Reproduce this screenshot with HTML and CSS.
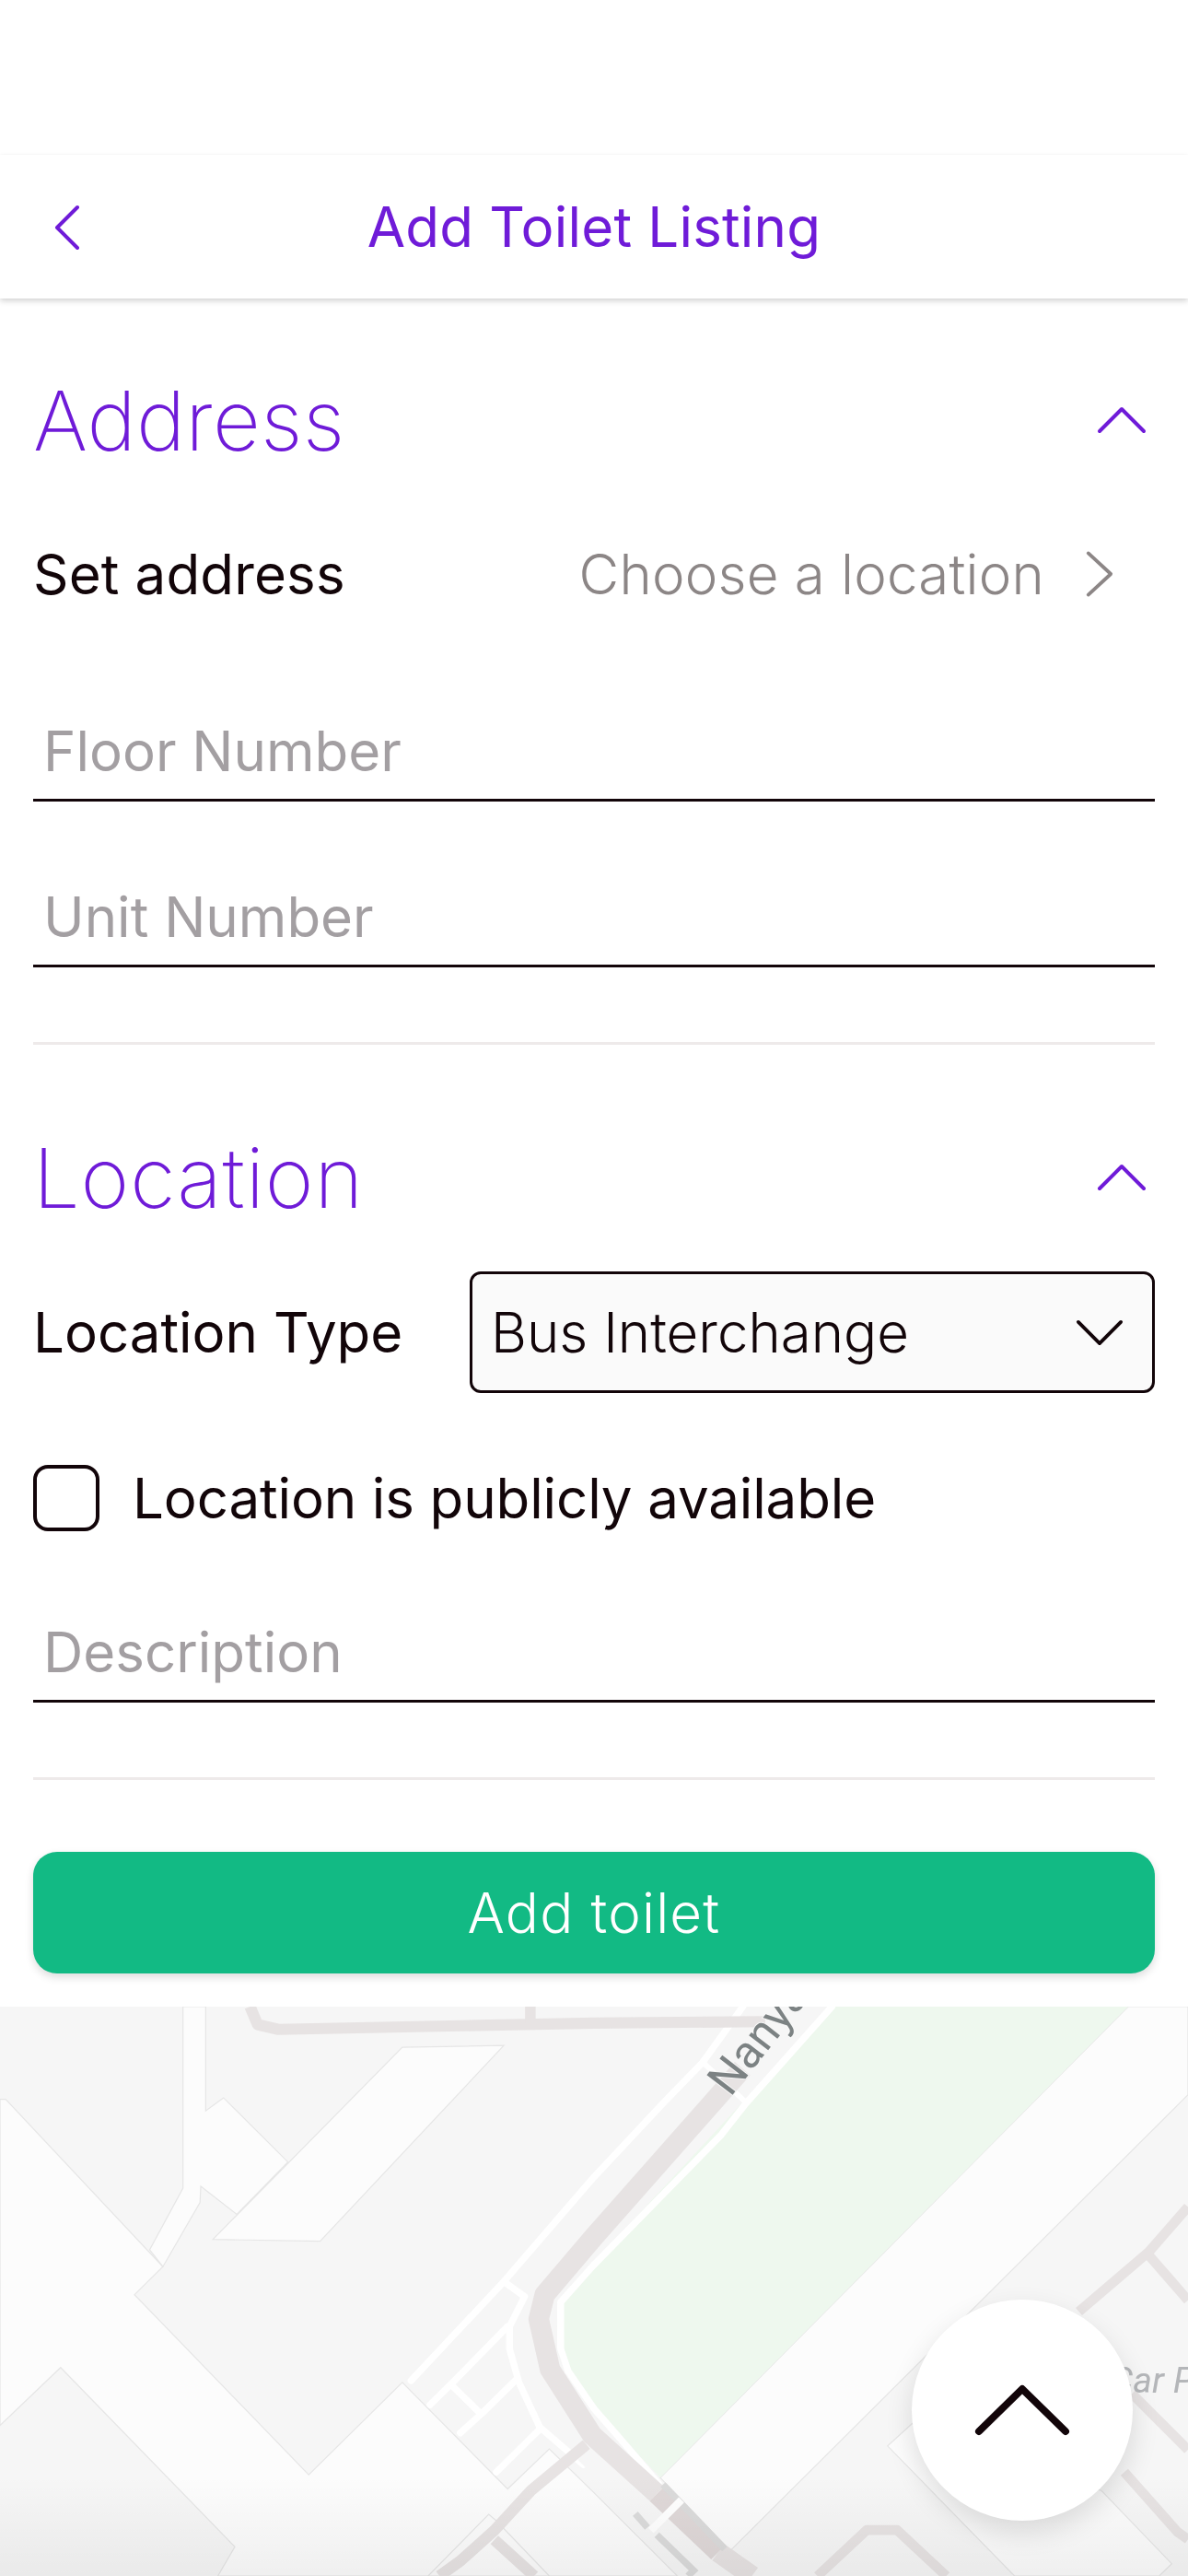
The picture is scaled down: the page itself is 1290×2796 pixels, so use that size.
FILE: index.html
```html
<!DOCTYPE html>
<html lang="en">
<head>
<meta charset="utf-8">
<title>Add Toilet Listing</title>
<link rel="stylesheet" href="styles.css">
</head>
<body>
<div class="page">
  <header class="topbar">
    <svg class="back" viewBox="0 0 32 52"><path d="M28 4 6 26l22 22"/></svg>
    <h1 class="topbar-title">Add Toilet Listing</h1>
  </header>
  <main class="form">
    <section class="sec-head sec-address">
      <h2 class="sec-title">Address</h2>
      <svg class="chev-up" viewBox="0 0 54 34"><path d="M3 29 27 5l24 24"/></svg>
    </section>
    <div class="row row-address">
      <span class="label label-address">Set address</span>
      <span class="choose">Choose a location</span>
      <svg class="chev-right" viewBox="0 0 34 54"><path d="M5 3l26 24L5 51"/></svg>
    </div>
    <div class="field field-floor"><span class="placeholder">Floor Number</span></div>
    <div class="field field-unit"><span class="placeholder">Unit Number</span></div>
    <hr class="divider">
    <section class="sec-head sec-location">
      <h2 class="sec-title">Location</h2>
      <svg class="chev-up" viewBox="0 0 54 34"><path d="M3 29 27 5l24 24"/></svg>
    </section>
    <div class="row row-type">
      <span class="label">Location Type</span>
      <div class="select">
        <span class="select-text">Bus Interchange</span>
        <svg class="chev-down" viewBox="0 0 54 34"><path d="M3 5l24 24L51 5"/></svg>
      </div>
    </div>
    <label class="check-row">
      <span class="checkbox"></span>
      <span class="label label-check">Location is publicly available</span>
    </label>
    <div class="field field-desc"><span class="placeholder">Description</span></div>
    <hr class="divider">
    <button class="submit" type="button">Add toilet</button>
  </main>
  <div class="map">
    <svg class="map-svg" viewBox="0 44 3136 1524" preserveAspectRatio="none">
      <defs>
        <linearGradient id="fade" x1="0" y1="0" x2="0" y2="1">
          <stop offset="0" stop-color="#000" stop-opacity="0"/>
          <stop offset="1" stop-color="#000" stop-opacity=".05"/>
        </linearGradient>
      </defs>
      <rect x="0" y="44" width="3136" height="1524" fill="#f6f6f6"/>
      <g class="blocks">
        <path d="M0 292H15L430 740 355 815 815 1297 1062 1050 1340 1335 1450 1228 1568 1345 1788 1568H575L620 1490 160 1010 0 1165Z"/>
        <path d="M483 44V530L395 695 430 740 528 568 530 525 625 600 760 460 590 288 543 323V44Z"/>
        <path d="M1062 153 1330 148 845 672 562 667Z"/>
        <path d="M2978 44H3136V280L1928 1500 1743 1305Z"/>
        <path d="M2408 1160 2343 1220 2678 1568H3060L3093 1535 2908 1340Z"/>
        <path d="M1290 1403 1130 1568H1450L1310 1420Z"/>
      </g>
      <path class="green" d="M2198 44H2978L1743 1305 1568 1120 1500 1020 1470 900 1480 830 1568 735 1640 650 1960 300Z"/>
      <g class="whites">
        <path d="M1085 1045 1330 780 1568 500 1750 303 1855 193 1961 44"/>
        <path d="M1135 1110 1200 1045 1340 900"/>
        <path d="M1330 780 1385 820 1345 900 1345 960 1370 1050 1425 1170 1540 1270"/>
        <path d="M1195 1060 1265 1130"/>
        <path d="M1215 1185 1275 1130 1365 1040"/>
        <path d="M1310 1290 1425 1175"/>
      </g>
      <g class="whites-green">
        <path d="M1568 735 1480 835 1480 960 1500 1020 1568 1120 1628 1190 1738 1320"/>
        <path d="M1568 735 1904 387 1969 303 2196 44"/>
        <path class="hair" d="M1855 193 1969 300"/>
      </g>
      <path class="strip" d="M1540 1241 1677 1380"/>
      <g class="roads">
        <path d="M660 44 680 92 735 105 1568 88 2020 84"/>
        <path class="spur" d="M1400 44V90"/>
        <path class="main" d="M1960 210 1568 660 1438 815 1422 880 1452 1015 1563 1191 1734 1348"/>
        <path class="main" d="M1896 1504 1985 1568"/>
        <path d="M1548 1216 1402 1339 1305 1446 1215 1528 1160 1568"/>
        <path d="M1305 1471 1410 1568"/>
        <path class="thin" d="M3136 580 3033 700 2848 860"/>
        <path class="thin" d="M3033 710 3136 830"/>
        <path class="thin" d="M2968 1290 3108 1450 3136 1470"/>
        <path class="thin" d="M2988 1080 3136 1230"/>
        <path class="thin" d="M2158 1568 2288 1445 2368 1445 2498 1568"/>
      </g>
      <path class="road-dark" d="M1734 1348 1896 1504"/>
      <g class="paths-gray">
        <path d="M1750 1323 1913 1496"/>
        <path d="M1677 1401 1709 1438"/>
        <path d="M1734 1458 1831 1553 1816 1568"/>
      </g>
      <path class="cross" d="M1799 1364 1718 1446"/>
      <rect x="0" y="1300" width="3136" height="268" fill="url(#fade)"/>
      <text class="map-label" transform="translate(1928 288) rotate(-52)">Nanya</text>
      <text class="map-label-soft" x="2930" y="1078">Car P</text>
    </svg>
  </div>
  <button class="scroll-top" type="button" aria-label="Scroll to top">
    <svg viewBox="0 0 104 56"><path d="M5 51 52 5l47 46"/></svg>
  </button>
</div>
</body>
</html>
```
FILE: styles.css
```css
* { box-sizing: border-box; }
html, body { margin: 0; padding: 0; background: #fff; }
.page {
  position: relative;
  width: 1290px;
  height: 2796px;
  overflow: hidden;
  font-family: Inter, "Liberation Sans", sans-serif;
  color: #120509;
  background: #fff;
}
.topbar {
  position: relative;
  margin-top: 168px;
  height: 156px;
  display: flex;
  align-items: center;
  justify-content: center;
  background: #fff;
  box-shadow: 0 0 2px rgba(0,0,0,.03), 0 3px 6px rgba(0,0,0,.16);
}
.back {
  position: absolute;
  left: 56px;
  top: 53px;
  width: 32px;
  height: 52px;
  fill: none;
  stroke: #6f1bd8;
  stroke-width: 4;
  stroke-linecap: round;
  stroke-linejoin: round;
}
.topbar-title {
  margin: 0;
  font-size: 60px;
  font-weight: 400;
  letter-spacing: .2px;
  color: #6f1bd8;
}
.form { padding: 0 36px; }
.sec-head {
  height: 120px;
  display: flex;
  align-items: center;
  justify-content: space-between;
}
.sec-address { margin-top: 72px; }
.sec-location { margin-top: 84px; }
.sec-title {
  margin: 0;
  font-size: 90px;
  font-weight: 200;
  letter-spacing: .25px;
  color: #6f1bd8;
}
.sec-location .sec-title { letter-spacing: .9px; }
.chev-up, .chev-down, .chev-right {
  fill: none;
  stroke-width: 4;
  stroke-linecap: round;
  stroke-linejoin: round;
  flex: none;
}
.chev-up { width: 54px; height: 34px; margin-right: 9px; stroke: #6f1bd8; }
.row { display: flex; align-items: center; }
.row-address { margin-top: 57px; height: 100px; }
.label { font-size: 60px; font-weight: 400; color: #120509; }
.label-address { letter-spacing: .15px; }
.label-check { letter-spacing: -.12px; }
.choose { margin-left: auto; font-size: 60px; font-weight: 300; letter-spacing: .2px; color: #8c8686; }
.chev-right { width: 32px; height: 52px; margin: 0 45px 0 43px; stroke: #8c8686; }
.field {
  height: 104px;
  padding: 0 0 16px 11px;
  display: flex;
  align-items: flex-end;
  border-bottom: 3px solid #120509;
}
.field-floor { margin-top: 93px; }
.field-unit { margin-top: 76px; }
.field-desc { margin-top: 82px; }
.placeholder { font-size: 60px; font-weight: 400; color: #a39fa2; line-height: 72px; }
.divider { margin: 81px 0 0; height: 3px; border: 0; background: #eeeaea; }
.row-type { margin-top: 42px; height: 132px; justify-content: space-between; }
.select {
  width: 744px;
  height: 132px;
  padding: 0 31px 0 20px;
  display: flex;
  align-items: center;
  justify-content: space-between;
  background: #fafafa;
  border: 3px solid #120509;
  border-radius: 12px;
}
.select-text { font-size: 60px; font-weight: 300; color: #120509; }
.chev-down { width: 52px; height: 33px; stroke: #120509; }
.check-row { margin-top: 78px; height: 72px; display: flex; align-items: center; gap: 36px; }
.checkbox {
  width: 72px;
  height: 72px;
  border: 4px solid #120509;
  border-radius: 16px;
  background: #fff;
  flex: none;
}
.submit {
  display: block;
  width: 100%;
  height: 132px;
  margin-top: 78px;
  border: 0;
  border-radius: 26px;
  background: #12ba84;
  color: #fff;
  font-family: inherit;
  font-size: 60px;
  font-weight: 300;
  letter-spacing: 1.2px;
  box-shadow: 0 4px 10px rgba(0,0,0,.14);
}
.map { margin-top: 36px; height: 618px; overflow: hidden; }
.map-svg { display: block; width: 1290px; height: 618px; filter: blur(.4px); }
.blocks path { fill: #fcfcfc; stroke: #e6e6e6; stroke-width: 3; }
.green { fill: #eef8ee; }
.whites, .whites path, .whites-green path {
  fill: none;
  stroke: #fff;
  stroke-width: 18;
  stroke-linecap: round;
  stroke-linejoin: round;
}
.whites-green .hair { stroke-width: 14; }
.strip { fill: none; stroke: #f6f6f6; stroke-width: 42; }
.roads path {
  fill: none;
  stroke: #e7e3e3;
  stroke-width: 30;
  stroke-linejoin: round;
}
.roads .main { stroke-width: 54; }
.roads .thin { stroke-width: 26; }
.roads .spur { stroke-width: 28; }
.road-dark { fill: none; stroke: #dfd8d8; stroke-width: 54; }
.paths-gray path { fill: none; stroke: #dbdbdb; stroke-width: 18; }
.cross { fill: none; stroke: #fff; stroke-width: 20; }
.map-label {
  font-family: Roboto, sans-serif;
  font-size: 122px;
  fill: #7c8283;
  stroke: #f7f7f7;
  stroke-width: 5;
  paint-order: stroke;
}
.map-label-soft {
  font-family: Roboto, sans-serif;
  font-style: italic;
  font-size: 96px;
  fill: #b4b6b9;
}
.scroll-top {
  position: absolute;
  left: 990px;
  top: 2496px;
  width: 240px;
  height: 240px;
  padding: 0;
  border: 0;
  border-radius: 50%;
  background: #fff;
  box-shadow: 0 12px 30px rgba(0,0,0,.12);
  display: flex;
  align-items: center;
  justify-content: center;
}
.scroll-top svg {
  width: 104px;
  height: 56px;
  fill: none;
  stroke: #120509;
  stroke-width: 8;
  stroke-linecap: round;
  stroke-linejoin: round;
}
```
